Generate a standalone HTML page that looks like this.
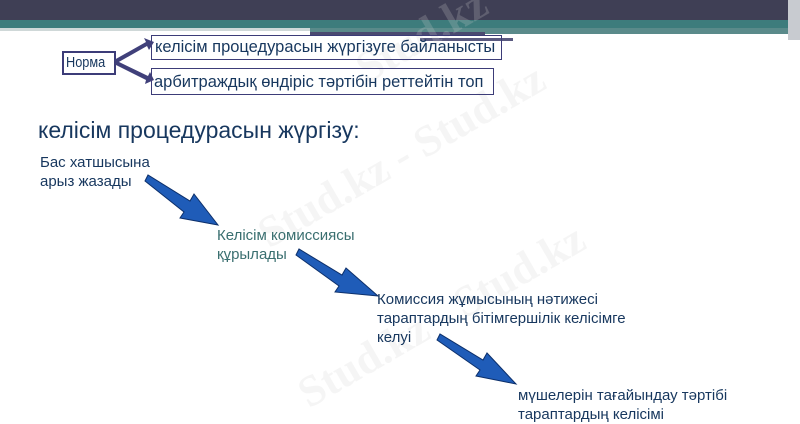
<!DOCTYPE html><html><head><meta charset="utf-8"><style>
body{margin:0;width:800px;height:422px;overflow:hidden;background:#fff;position:relative;font-family:"Liberation Sans",sans-serif}
.a{position:absolute}
.t{font-size:15px;color:#17375e;line-height:19px;white-space:nowrap}
.wm{position:absolute;font-family:"Liberation Serif",serif;font-weight:bold;font-size:44px;color:rgba(210,210,210,0.22);transform:rotate(-30deg);white-space:nowrap}
</style></head><body>
<div class="a" style="left:0;top:0;width:800px;height:20px;background:#3f3f55"></div>
<div class="a" style="left:0;top:20px;width:800px;height:8px;background:#3d7c7c"></div>
<div class="a" style="left:0;top:28px;width:310px;height:3px;background:#cfd8d8"></div>
<div class="a" style="left:310px;top:28px;width:490px;height:6px;background:#5a8a8a"></div>
<div class="a" style="left:310px;top:32px;width:175px;height:3px;background:#4a4a70"></div>
<div class="a" style="left:420px;top:38px;width:93px;height:3px;background:#5a5a80"></div>
<div class="a" style="left:788px;top:0;width:12px;height:40px;background:#c8cbd0"></div>
<div class="wm" style="left:350px;top:10px">Stud.kz</div>
<div class="wm" style="left:240px;top:130px">Stud.kz - Stud.kz</div>
<div class="wm" style="left:280px;top:290px">Stud.kz - Stud.kz</div>
<div class="a" style="left:62px;top:51px;width:54px;height:24px;border:2px solid #3c3c78;box-sizing:border-box"></div>
<div class="a t" style="left:66px;top:53px;font-size:15px;transform:scaleX(0.85);transform-origin:left">Норма</div>
<div class="a" style="left:151px;top:35px;width:351px;height:25px;border:1.5px solid #3c3c78;box-sizing:border-box"></div>
<div class="a t" style="left:155px;top:37px;font-size:17px;transform:scaleX(0.97);transform-origin:left">келісім процедурасын жүргізуге байланысты</div>
<div class="a" style="left:151px;top:68px;width:343px;height:27px;border:1.5px solid #3c3c78;box-sizing:border-box"></div>
<div class="a t" style="left:154px;top:72px;font-size:17px;transform:scaleX(0.97);transform-origin:left">арбитраждық өндіріс тәртібін реттейтін топ</div>
<svg class="a" style="left:0;top:0" width="800" height="422">
<g fill="#40407a"><polygon points="114,60 146,42 144,38 154,42 149,50 147,46 117,63"/><polygon points="114,64 146,80 145,84 154,80 150,72 148,76 117,61"/></g>
<g fill="#1f5cb8" stroke="#0c2f6a" stroke-width="1">
<polygon points="145,181 148,175 190,201 194,194 218,225 180,218 184,212"/>
<polygon points="296,255 299,249 342,275 346,268 378,296 335,292 339,286"/>
<polygon points="437,340 440,334 483,360 487,353 516,384 476,376 480,370"/>
</g></svg>
<div class="a" style="left:38px;top:117px;font-size:23px;color:#17375e">келісім процедурасын жүргізу:</div>
<div class="a t" style="left:40px;top:153px">Бас хатшысына<br>арыз жазады</div>
<div class="a t" style="left:217px;top:226px;color:#3a6f70">Келісім комиссиясы<br>құрылады</div>
<div class="a t" style="left:377px;top:290px">Комиссия жұмысының нәтижесі<br>тараптардың бітімгершілік келісімге<br>келуі</div>
<div class="a t" style="left:518px;top:386px">мүшелерін тағайындау тәртібі<br>тараптардың келісімі</div>
</body></html>
